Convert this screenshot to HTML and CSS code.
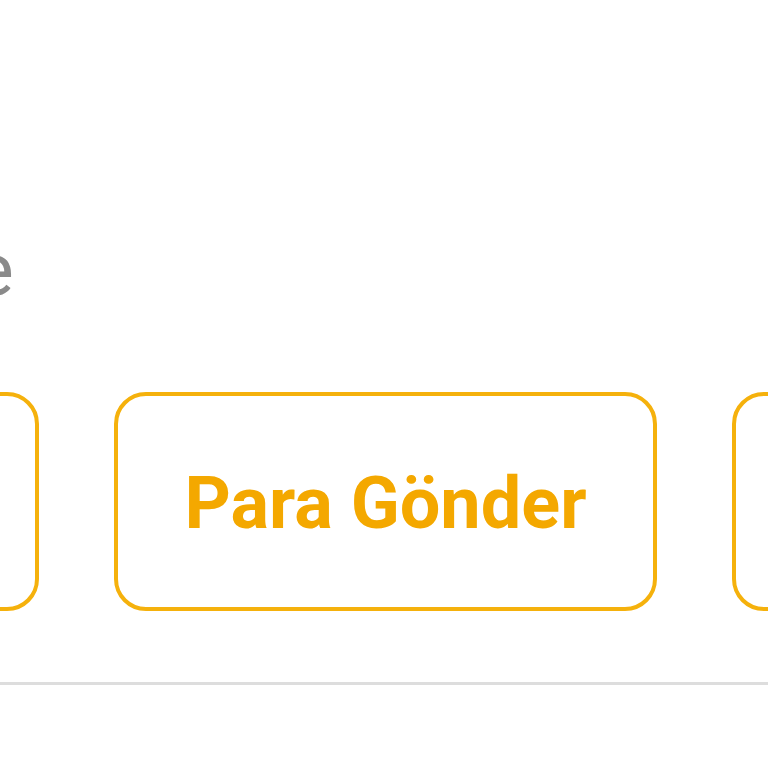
FILE: index.html
```html
<!DOCTYPE html>
<html lang="tr">
<head>
<meta charset="utf-8">
<title>Para Gönder</title>
<link rel="stylesheet" href="styles.css">
</head>
<body>
<main class="screen">
  <div class="caption">e</div>
  <div class="actions">
    <button class="action" type="button"></button>
    <button class="action" type="button">Para Gönder</button>
    <button class="action" type="button"></button>
  </div>
  <hr class="divider">
</main>
</body>
</html>
```

FILE: styles.css
```css
html, body {
  margin: 0;
  padding: 0;
  background: #ffffff;
}

.screen {
  width: 768px;
  height: 768px;
  overflow: hidden;
  font-family: Roboto, "Liberation Sans", sans-serif;
  display: flex;
  flex-direction: column;
}

.caption {
  margin-top: 226px;
  margin-left: -26px;
  font-size: 75px;
  line-height: 86px;
  color: #8a8a8a;
  font-weight: 400;
}

.actions {
  margin-top: 80px;
  margin-left: -504px;
  display: flex;
  gap: 75px;
}

.action {
  flex: 0 0 543px;
  height: 219px;
  box-sizing: border-box;
  border: 4px solid #f5b10c;
  border-radius: 32px;
  background: #ffffff;
  color: #f4a800;
  font-family: Roboto, "Liberation Sans", sans-serif;
  font-weight: 700;
  font-size: 72px;
  padding: 4px 0 0;
  display: flex;
  align-items: center;
  justify-content: center;
}

.divider {
  margin: 71px 0 0;
  border: 0;
  height: 3px;
  background: #dddddd;
}
```
